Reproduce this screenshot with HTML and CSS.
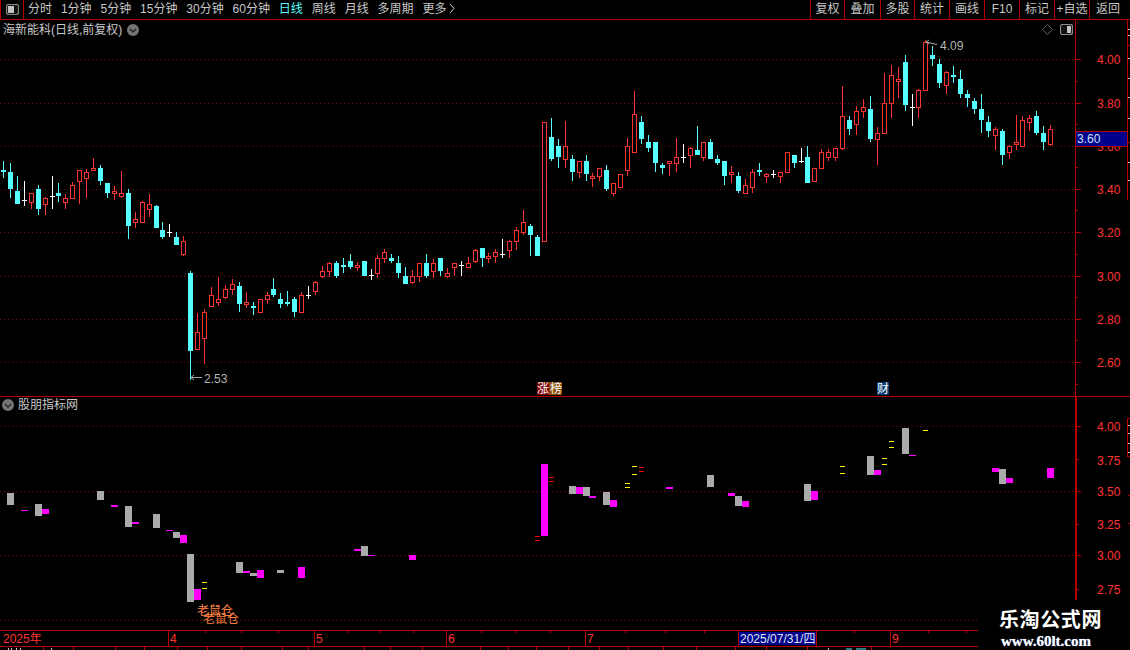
FILE: index.html
```html
<!DOCTYPE html>
<html lang="zh-CN">
<head>
<meta charset="utf-8">
<title>海新能科 日线</title>
<link rel="stylesheet" href="styles.css">
</head>
<body>
<div class="app">
  <header class="toolbar">
    <div class="toggle-cell">
      <svg class="pane-icon" viewBox="0 0 13 11"><rect class="pane-frame" x=".5" y=".5" width="12" height="10" rx="2"/><rect class="pane-fill" x="2" y="2" width="6" height="7"/></svg>
    </div>
    <nav class="periods">
      <span>分时</span><span>1分钟</span><span>5分钟</span><span>15分钟</span><span>30分钟</span><span>60分钟</span><span class="active">日线</span><span>周线</span><span>月线</span><span>多周期</span><span>更多<svg class="more-arrow" viewBox="0 0 6 11"><path d="M1 1l4 4.5L1 10"/></svg></span>
    </nav>
    <nav class="actions">
      <span>复权</span><span>叠加</span><span>多股</span><span>统计</span><span>画线</span><span>F10</span><span>标记</span><span>+自选</span><span class="back">返回</span>
    </nav>
  </header>

  <section class="panel panel-main">
    <svg id="chart-main" class="chart chart-main" viewBox="0 20 1130 376">
      <g class="grid">
        <path d="M0 59.5H1075M0 103.5H1075M0 146.5H1075M0 189.5H1075M0 232.5H1075M0 276.5H1075M0 319.5H1075M0 362.5H1075"/>
      </g>
      <g id="main-layer"></g>
      <path class="note-line" d="M191 377.5H202M194 375l-3 2.5 3 2.5M926 42l11 2.5M929 40l-3 2 3 2"/>
      <text class="note" x="204" y="383">2.53</text>
      <text class="note" x="940" y="50">4.09</text>
      <path class="axis" d="M1075.5 20V396"/>
      <path class="axis" d="M1075 59.5h6M1075 103.5h6M1075 146.5h6M1075 189.5h6M1075 232.5h6M1075 276.5h6M1075 319.5h6M1075 362.5h6M1075 81.5h3M1075 124.5h3M1075 167.5h3M1075 210.5h3M1075 254.5h3M1075 297.5h3M1075 340.5h3M1075 384.5h3"/>
      <g class="scale">
        <text x="1097" y="64">4.00</text><text x="1097" y="108">3.80</text><text x="1097" y="151">3.60</text><text x="1097" y="194">3.40</text><text x="1097" y="237">3.20</text><text x="1097" y="281">3.00</text><text x="1097" y="324">2.80</text><text x="1097" y="367">2.60</text>
      </g>
      <path class="axis" d="M1127.5 20V200M1127 45.5h3M1127 142.5h3"/>
      <path class="tick-white" d="M1128 29.5h2M1128 35.5h2M1128 58.5h2M1128 78.5h2M1128 97.5h2M1128 118.5h2M1128 162.5h2M1128 180.5h2"/>
      <rect class="flag-red" x="537" y="382" width="12" height="13"/>
      <rect class="flag-brown" x="549" y="382" width="13" height="13"/>
      <text class="flag-text" x="537" y="393">涨</text>
      <text class="flag-text" x="550" y="393">榜</text>
      <rect class="flag-blue" x="877" y="382" width="12" height="13"/>
      <text class="flag-text" x="877" y="393">财</text>
    </svg>
    <div class="panel-title title-main">
      <span>海新能科(日线,前复权)</span>
      <svg class="chevron" viewBox="0 0 12 12"><circle cx="6" cy="6" r="6"/><path d="M3 5l3 3 3-3"/></svg>
    </div>
    <div class="main-tools">
      <svg class="diamond" viewBox="0 0 11 11"><path d="M5.5 .5l5 5-5 5-5-5z"/></svg>
      <svg class="pane-icon" viewBox="0 0 13 11"><rect class="pane-frame" x=".5" y=".5" width="12" height="10" rx="2"/><rect class="pane-fill" x="7" y="2" width="4" height="7"/></svg>
    </div>
    <div class="price-tag">3.60</div>
  </section>

  <section class="panel panel-sub">
    <svg id="chart-sub" class="chart chart-sub" viewBox="0 397 1130 233">
      <g class="grid">
        <path d="M0 426.5H1075M0 491.5H1075M0 555.5H1075M0 620.5H978"/>
      </g>
      <g id="sub-layer"></g>
      <text class="rat" x="197" y="615">老鼠仓</text>
      <text class="rat" x="203" y="623">老鼠仓</text>
      <rect class="axis-thick" x="1075" y="397" width="2" height="203"/>
      <path class="axis" d="M1077 426.5h4M1077 491.5h4M1077 555.5h4M1077 459.5h2M1077 524.5h2M1077 589.5h2"/>
      <g class="scale">
        <text x="1097" y="431">4.00</text><text x="1097" y="465">3.75</text><text x="1097" y="496">3.50</text><text x="1097" y="529">3.25</text><text x="1097" y="560">3.00</text><text x="1097" y="594">2.75</text>
      </g>
      <path class="axis" d="M1127.5 418V456M1127 418.5h3M1127 456.5h3M1128 495.5h2M1128 523.5h2"/>
      <path class="tick-white" d="M1128 425.5h2M1128 433.5h2M1128 443.5h2M1128 452.5h2"/>
    </svg>
    <div class="panel-title title-sub">
      <svg class="chevron" viewBox="0 0 12 12"><circle cx="6" cy="6" r="6"/><path d="M3 5l3 3 3-3"/></svg>
      <span>股朋指标网</span>
    </div>
  </section>

  <section class="dates">
    <svg id="chart-dates" class="chart chart-dates" viewBox="0 630 1130 20">
      <path class="axis" d="M0 630.5H978M0 646.5H978M168.5 630V646M314.5 630V646M446.5 630V646M585.5 630V646M738.5 630V646M816.5 630V646M890.5 630V646"/>
      <path class="axis" d="M205.5 631v2M241.5 631v2M278.5 631v2M347.5 631v2M380.5 631v2M413.5 631v2M481.5 631v2M516.5 631v2M550.5 631v2M625.5 631v2M665.5 631v2M704.5 631v2M854.5 631v2M928.5 631v2M966.5 631v2"/>
      <path class="axis" d="M43.5 647v3M73.5 647v3M115.5 647v3M144.5 647v3M177.5 647v3M207.5 647v3M241.5 647v3M282.5 647v3M308.5 647v3M364.5 647v3M390.5 647v3M422.5 647v3M480.5 647v3M508.5 647v3M536.5 647v3M568.5 647v3M599.5 647v3M628.5 647v3M663.5 647v3M696.5 647v3M735.5 647v3M766.5 647v3M807.5 647v3M871.5 647v3"/>
      <path class="tick-white" d="M8.5 648v2M11.5 648v2M16.5 648v2M20.5 648v2M51.5 648v2M828.5 648v2"/>
      <path class="tick-cyan" d="M846 649h6M856 649h10"/>
      <g class="scale">
        <text x="3" y="643">2025年</text><text x="170" y="643">4</text><text x="316" y="643">5</text><text x="448" y="643">6</text><text x="587" y="643">7</text><text x="892" y="643">9</text>
      </g>
      <rect class="date-box" x="739" y="632" width="77" height="13"/>
      <text class="date-text" x="740" y="643">2025/07/31/四</text>
    </svg>
  </section>

  <aside class="watermark">
    <strong class="wm-name">乐淘公式网</strong>
    <span class="wm-url">www.60lt.com</span>
  </aside>
</div>
<script src="chart.js"></script>
</body>
</html>
```

FILE: styles.css
```css
* { box-sizing: border-box; }
html, body { margin: 0; padding: 0; background: #000; }
body {
  width: 1130px;
  height: 650px;
  overflow: hidden;
  font: 12px/1 "Liberation Sans", "Noto Sans CJK SC", sans-serif;
  color: #c8c8c8;
}
.app { position: relative; width: 1130px; height: 650px; }

.toolbar {
  display: flex;
  height: 20px;
  border-bottom: 1px solid #b80000;
  line-height: 19px;
}
.toggle-cell {
  flex: none;
  width: 24px;
  display: flex;
  align-items: center;
  justify-content: center;
  border-left: 1px solid #b80000;
  border-right: 1px solid #b80000;
}
.periods {
  display: flex;
  gap: 8.9px;
  padding-left: 4px;
  white-space: nowrap;
}
.periods .active { color: #55ffff; }
.more-arrow { width: 6px; height: 11px; margin-left: 3px; vertical-align: -1px; fill: none; stroke: #c8c8c8; }
.actions {
  margin-left: auto;
  display: grid;
  grid-template-columns: 34px 36px 34px 35px 35px 35px 35px 35px 41px;
  width: 320px;
  text-align: center;
  white-space: nowrap;
}
.actions span { border-left: 1px solid #b80000; }
.actions .back { padding-right: 4px; }

.pane-icon { width: 13px; height: 11px; display: block; }
.pane-frame { fill: #111; stroke: #8a8a8a; stroke-width: 1.2; }
.pane-fill { fill: #c4c4c4; }

.panel { position: relative; }
.panel-main { height: 377px; border-bottom: 1px solid #b80000; }
.panel-sub { height: 233px; }
.chart { display: block; width: 1130px; }
.chart-main { height: 376px; }
.chart-sub { height: 233px; }
.chart-dates { height: 20px; }

.grid path { fill: none; stroke: #7a0808; stroke-dasharray: 1 3; }
.axis { fill: none; stroke: #b80000; }
.axis-thick { fill: #b80000; }
.tick-white { fill: none; stroke: #c8c8c8; }
.tick-cyan { fill: none; stroke: #55ffff; }

.scale text { fill: #ff3232; font-size: 12px; }
.note { fill: #b4b4b4; font-size: 12px; }
.note-line { fill: none; stroke: #a8a8a8; }
.rat { fill: #ff8040; font-size: 12px; }

.flag-red { fill: #7e0000; }
.flag-brown { fill: #8a4c08; }
.flag-blue { fill: #0b3a74; }
.flag-text { fill: #fff; font-size: 12px; }

.panel-title {
  position: absolute;
  display: flex;
  align-items: center;
  white-space: nowrap;
}
.title-main { left: 3px; top: 4px; gap: 5px; }
.title-sub { left: 2px; top: 2px; gap: 4px; }
.chevron { width: 12px; height: 12px; flex: none; }
.chevron circle { fill: #747474; }
.chevron path { fill: none; stroke: #222; stroke-width: 1.3; }

.main-tools {
  position: absolute;
  left: 1042px;
  top: 4px;
  display: flex;
  align-items: center;
  gap: 7px;
}
.diamond { width: 11px; height: 11px; fill: none; stroke: #666; }

.price-tag {
  position: absolute;
  left: 1076px;
  top: 111px;
  width: 51px;
  height: 16px;
  padding-left: 1px;
  background: #00008c;
  border-top: 1px solid #b80000;
  border-bottom: 1px solid #b80000;
  color: #cfe4f2;
  line-height: 14px;
}

.date-box { fill: #00008c; }
.date-text { fill: #dfe8f2; font-size: 12px; }

.watermark {
  position: absolute;
  right: 0;
  bottom: 0;
  width: 152px;
  height: 50px;
  padding: 9px 0 0 21px;
  background: #000;
  color: #fff;
  display: flex;
  flex-direction: column;
  gap: 5px;
}
.wm-name {
  font: 700 20px/20px "Noto Sans CJK SC", sans-serif;
  letter-spacing: .6px;
  white-space: nowrap;
}
.wm-url {
  font: 700 15px/14px "Liberation Serif", serif;
  margin-left: 2px;
  white-space: nowrap;
  text-shadow: 0 0 1px #8fb4ff;
}

.wick-c { fill: #55ffff; }
.wick-r { fill: #ff3232; }
.wick-w { fill: #fff; }
.body-c { fill: #55ffff; }
.body-r { fill: #000; stroke: #ff3232; }
.body-w { fill: #fff; }
.bar-g { fill: #aaa; }
.bar-m { fill: #f0f; }
.bar-y { fill: #ff0; }
.bar-d { fill: #f00; }
```

FILE: chart.js
```js
// Coordinates are [kind, x, high, low, bodyTop, bodyBottom] measured on a 3x grid,
// each group relative to its own origin.
var candleGroups = [
  { ox: 0, oy: 150, rows: [
    ['c',10,33,84,60,66],['c',31,39,145,66,117],['c',52,78,162,123,162],['w',73,93,168,151],['r',94,129,177,130,159],
    ['c',115,105,195,117,177],['r',136,141,195,145,165],['w',157,78,177,139],['c',175,99,156,129,138],['r',196,132,177,145,159],
    ['r',217,96,147,106,147],['r',238,60,162,61,95],['r',259,57,144,67,87],['r',280,24,63,55,63],['c',301,45,105,54,93],
    ['c',322,99,144,99,129],['r',343,108,150,124,132],['r',364,63,144,130,141],['c',385,117,267,129,228],['r',406,186,234,208,218],
    ['r',427,153,219,157,219],['r',448,132,201,163,179],['c',469,165,234,168,234],['c',487,216,267,240,261],['w',508,222,261,247],
    ['c',529,246,285,261,285],['r',550,258,318,274,315],['c',571,363,690,369,603],['r',592,489,600,547,600],['r',613,477,642,487,567],
    ['r',634,411,471,436,471],['r',655,381,468,448,459],['r',676,405,447,418,444],['r',697,387,435,403,420],['c',718,396,486,408,462],
    ['r',739,426,474,457,466],['c',760,456,495,468,474],['r',781,447,489,448,489],['r',802,426,462,436,450],['c',820,384,441,417,435],
    ['c',841,429,474,447,462],['c',862,423,468,456,462],['c',883,441,501,447,486],['r',904,426,489,436,489],['w',925,408,447,436],
    ['r',946,393,435,397,426],['r',967,348,384,364,381],['r',988,336,381,340,366]
  ]},
  { ox: 330, oy: 100, rows: [
    ['c',19,483,534,489,528],['c',40,474,519,495,501],['c',61,462,507,483,501],['r',82,486,513,496,503],['c',103,483,528,483,528],
    ['w',124,507,540,525],['r',142,465,534,475,521],['r',163,447,489,457,476],['c',184,462,489,474,483],['c',205,468,534,489,519],
    ['c',226,501,552,528,552],['r',247,510,552,529,548],['r',268,489,546,490,530],['c',289,462,534,489,528],['r',310,477,534,490,516],
    ['c',331,474,528,474,513],['r',352,504,534,520,530],['r',373,489,528,490,503],['w',394,483,528,496],['r',415,471,504,490,503],
    ['r',436,447,489,451,486],['c',457,444,501,444,474],['r',475,459,489,469,477],['r',496,447,489,457,471],['w',517,417,474,462],
    ['r',538,420,474,424,453],['r',559,381,450,391,426],['r',580,330,405,367,399],['c',601,372,468,378,405],['c',622,405,468,411,468],
    ['r',643,66,426,67,426],['c',664,54,183,111,177],['c',685,117,204,138,171],['r',706,63,204,139,180],['c',727,165,243,177,216],
    ['r',748,183,234,184,218],['c',769,165,243,183,222],['r',787,219,261,229,237],['r',808,205,243,205,231],['c',829,195,273,210,267],
    ['r',850,250,288,250,282],['r',871,223,264,223,264],['r',892,114,228,139,212],['r',913,-27,159,43,159],['c',934,48,132,66,117],
    ['c',955,105,156,126,144],['c',976,126,216,126,189]
  ]},
  { ox: 660, oy: 80, rows: [
    ['c',7,249,282,255,264],['r',28,244,288,244,251],['r',49,174,276,232,251],['w',70,192,249,232],['r',91,201,264,205,228],
    ['c',112,138,225,210,225],['r',130,186,243,187,233],['c',151,177,237,186,237],['c',172,225,255,237,249],['c',193,243,315,243,288],
    ['r',214,258,309,277,285],['c',235,276,339,288,333],['r',256,297,342,316,342],['r',277,267,339,277,323],['c',298,249,288,270,276],
    ['r',319,279,309,283,290],['w',340,270,294,283],['r',361,277,309,277,290],['r',382,217,279,217,279],['c',403,225,264,225,249],
    ['w',424,204,249,243],['c',442,198,309,231,309],['r',463,265,306,265,306],['r',484,208,267,217,267],['r',505,208,243,217,234],
    ['r',526,205,243,205,234],['r',547,18,210,109,206],['c',568,108,165,120,147],['r',589,78,165,94,135],['r',610,57,114,82,96],
    ['c',631,48,186,87,177],['r',652,141,255,160,180]
  ]},
  { ox: 780, oy: 0, rows: [
    ['r',313,219,402,310,402],['r',334,195,354,226,311],['r',355,201,294,238,245],['c',376,165,333,186,315],['w',397,282,378,322],
    ['r',415,268,354,271,323],['r',436,120,273,127,272],['c',457,138,198,165,177],['c',478,177,264,192,249],['r',499,214,282,217,257],
    ['c',520,198,249,225,231],['c',541,210,294,237,282],['c',562,270,321,282,294],['c',583,294,342,303,327],['c',604,282,399,327,360],
    ['c',625,348,411,366,393],['r',646,381,450,388,408],['c',667,387,495,393,465],['r',688,435,477,439,458],['r',709,345,450,427,435],
    ['r',727,348,441,361,440],['r',748,345,393,355,368],['c',769,333,405,348,399],['c',790,378,450,399,426],['r',811,375,438,388,435]
  ]}
];

// Sub-panel blocks: [kind, x1, x2, y1, y2], same 3x grid.
var barGroups = [
  { ox: 0, oy: 395, rows: [
    ['g',21,42,294,330],['m',63,84,345,348],['g',105,126,327,363],['m',126,147,342,357],['g',291,312,288,315],['m',333,354,330,336],
    ['g',375,396,333,396],['m',396,417,381,387],['g',459,480,357,399],['m',498,519,405,408],['g',519,540,411,429],['m',540,561,420,444],
    ['g',561,582,477,621],['m',582,603,582,615],['y',606,621,561,564],['y',606,621,579,582],['g',708,729,501,534],['m',729,750,528,534],
    ['g',750,771,534,543],['m',771,792,525,549],['g',831,852,525,534],['m',894,915,516,549]
  ]},
  { ox: 330, oy: 395, rows: [
    ['m',72,93,462,468],['g',93,114,453,483],['m',114,135,480,483],['m',237,258,480,495],['d',615,630,423,426],['d',615,630,435,438],
    ['m',633,654,207,423],['d',657,672,246,249],['d',657,672,258,261],['g',717,738,273,297],['m',738,759,276,297],['g',759,780,276,303],
    ['m',777,798,303,309],['g',819,840,291,330],['m',840,861,315,336],['y',885,900,264,267],['y',885,900,276,279],['y',906,921,213,216],
    ['y',906,921,237,240],['d',927,942,216,219],['d',927,942,228,231],['m',1008,1029,276,282],['g',1131,1152,240,276]
  ]},
  { ox: 730, oy: 395, rows: [
    ['m',-6,16,294,303],['g',15,36,303,333],['m',36,57,318,336],['g',222,243,267,318],['m',243,264,288,315],['y',330,345,213,216],
    ['y',330,345,234,237],['g',411,432,183,240],['m',432,453,225,240],['y',456,471,189,192],['y',456,471,207,210],['y',477,492,138,141],
    ['y',477,492,156,159],['g',516,537,99,177],['m',537,558,180,183],['y',579,594,105,108],['m',786,807,219,231],['g',807,828,222,267],
    ['m',828,849,249,264],['m',951,972,219,249]
  ]}
];

var SVG_NS = 'http://www.w3.org/2000/svg';

function addRect(parent, cls, x, y, w, h) {
  var r = document.createElementNS(SVG_NS, 'rect');
  r.setAttribute('class', cls);
  r.setAttribute('x', x);
  r.setAttribute('y', y);
  r.setAttribute('width', w);
  r.setAttribute('height', Math.max(h, 1));
  parent.appendChild(r);
}

function drawCandles() {
  var layer = document.getElementById('main-layer');
  candleGroups.forEach(function (g) {
    g.rows.forEach(function (c) {
      var px = Math.floor(g.ox + c[1] / 3);
      var hi = Math.round(g.oy + c[2] / 3);
      var lo = Math.round(g.oy + c[3] / 3);
      addRect(layer, 'wick-' + c[0], px, hi, 1, lo - hi);
      if (c[0] === 'w') {
        addRect(layer, 'body-w', px - 2, Math.floor(g.oy + c[4] / 3), 5, 1);
        return;
      }
      var top = Math.round(g.oy + c[4] / 3);
      var bot = Math.round(g.oy + c[5] / 3);
      if (c[0] === 'c') {
        addRect(layer, 'body-c', px - 2, top, 5, bot - top);
      } else {
        addRect(layer, 'body-r', px - 1.5, top + 0.5, 4, bot - top - 1);
      }
    });
  });
}

function drawBars() {
  var layer = document.getElementById('sub-layer');
  barGroups.forEach(function (g) {
    g.rows.forEach(function (b) {
      var x = Math.round(g.ox + b[1] / 3);
      var y = Math.round(g.oy + b[3] / 3);
      addRect(layer, 'bar-' + b[0], x, y, Math.round((b[2] - b[1]) / 3), Math.round((b[4] - b[3]) / 3));
    });
  });
}

drawCandles();
drawBars();
```
